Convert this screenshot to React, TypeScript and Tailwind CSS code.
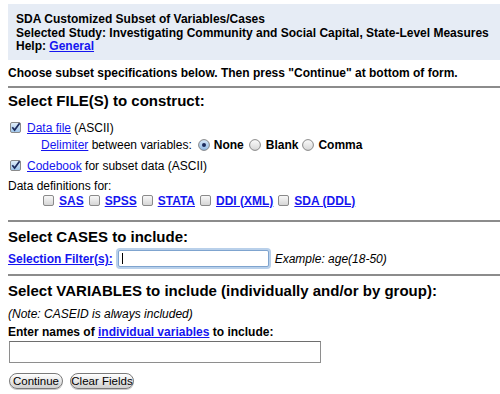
import React from "react";

function CheckBox({ checked }: { checked?: boolean }) {
  return (
    <svg width="11" height="11" viewBox="0 0 11 11" className="inline-block shrink-0">
      <defs>
        <linearGradient id={checked ? "cbOn" : "cbOff"} x1="0" y1="0" x2="0" y2="1">
          <stop offset="0" stopColor={checked ? "#e4f0fb" : "#fafafa"} />
          <stop offset="1" stopColor={checked ? "#9cc4ea" : "#d4d4d4"} />
        </linearGradient>
      </defs>
      <rect x="0.5" y="0.5" width="10" height="10" rx="1.5" fill={`url(#${checked ? "cbOn" : "cbOff"})`} stroke="#8a8a8a" />
      {checked && <path d="M2.3 5.2 L4.6 8 L9.6 1.2" fill="none" stroke="#1b2a5c" strokeWidth="1.7" />}
    </svg>
  );
}

function Radio({ checked }: { checked?: boolean }) {
  return (
    <svg width="12" height="12" viewBox="0 0 12 12" className="inline-block shrink-0">
      <defs>
        <linearGradient id={checked ? "rdOn" : "rdOff"} x1="0" y1="0" x2="0" y2="1">
          <stop offset="0" stopColor={checked ? "#d8e8f8" : "#fcfcfc"} />
          <stop offset="1" stopColor={checked ? "#8fb8e4" : "#d6d6d6"} />
        </linearGradient>
      </defs>
      <circle cx="6" cy="6" r="5.4" fill={`url(#${checked ? "rdOn" : "rdOff"})`} stroke="#7c7c7c" strokeWidth="0.9" />
      {checked && <circle cx="6" cy="6" r="2" fill="#1b2a5c" />}
    </svg>
  );
}

const link = "text-[#1515f0] underline";
const button =
  "h-[16px] rounded-full border border-[#7a7a7a] bg-gradient-to-b from-white to-[#d0d0d0] text-[11.5px] leading-[14px] shadow-[0_1px_0_#c8c8c8]";

export default function App() {
  return (
    <div className="w-[500px] h-[394px] overflow-hidden bg-white text-black text-[12px] font-['Liberation_Sans',Arial,sans-serif]">
      <div className="mt-[4px] ml-[8px] bg-[#e6ecf5] pt-[9px] pb-[6px] pl-[8px] font-bold leading-[13.5px]">
        <div>SDA Customized Subset of Variables/Cases</div>
        <div>Selected Study: Investigating Community and Social Capital, State-Level Measures</div>
        <div>
          Help: <a className={link}>General</a>
        </div>
      </div>

      <div className="mt-[6px] ml-[8px] font-bold leading-[14px]">
        Choose subset specifications below. Then press "Continue" at bottom of form.
      </div>
      <div className="mt-[6px] ml-[8px] border-t-2 border-[#8c8c8c]" />

      <div className="mt-[4px] ml-[8px] font-bold text-[15px] leading-[18px]">Select FILE(S) to construct:</div>

      <div className="mt-[10px] ml-[10px] flex items-center gap-[6px] leading-[16px]">
        <CheckBox checked />
        <span>
          <a className={link}>Data file</a> (ASCII)
        </span>
      </div>
      <div className="mt-[1px] ml-[41px] flex items-center leading-[16px]">
        <span>
          <a className={link}>Delimiter</a> between variables:
        </span>
        <span className="ml-[6px]"><Radio checked /></span>
        <span className="ml-[4px] font-bold">None</span>
        <span className="ml-[5px]"><Radio /></span>
        <span className="ml-[5px] font-bold">Blank</span>
        <span className="ml-[4px]"><Radio /></span>
        <span className="ml-[4px] font-bold">Comma</span>
      </div>
      <div className="mt-[5px] ml-[10px] flex items-center gap-[6px] leading-[16px]">
        <CheckBox checked />
        <span>
          <a className={link}>Codebook</a> for subset data (ASCII)
        </span>
      </div>
      <div className="mt-[5px] ml-[8px] leading-[14px]">Data definitions for:</div>
      <div className="ml-[43px] flex items-center gap-[5px] leading-[16px] font-bold">
        <CheckBox />
        <a className={link}>SAS</a>
        <CheckBox />
        <a className={link}>SPSS</a>
        <CheckBox />
        <a className={link}>STATA</a>
        <CheckBox />
        <a className={link}>DDI (XML)</a>
        <CheckBox />
        <a className={link}>SDA (DDL)</a>
      </div>
      <div className="mt-[11px] ml-[8px] border-t-2 border-[#8c8c8c]" />

      <div className="mt-[6px] ml-[8px] font-bold text-[15px] leading-[18px]">Select CASES to include:</div>
      <div className="mt-[4px] ml-[8px] flex items-center h-[18px]">
        <a className={`${link} font-bold`}>Selection Filter(s):</a>
        <div className="relative ml-[5px] w-[151px] h-[17px] border border-[#7fa4cf] rounded-[2px] shadow-[0_0_0_2px_#b9d0ea] bg-white">
          <span className="absolute left-[3px] top-[2px] w-[1px] h-[11px] bg-black" />
        </div>
        <span className="ml-[6px] italic">Example: age(18-50)</span>
      </div>
      <div className="mt-[6px] ml-[8px] border-t-2 border-[#8c8c8c]" />

      <div className="mt-[6px] ml-[8px] font-bold text-[15px] leading-[18px]">
        Select VARIABLES to include (individually and/or by group):
      </div>
      <div className="mt-[7px] ml-[8px] italic leading-[14px]">(Note: CASEID is always included)</div>
      <div className="mt-[4px] ml-[8px] font-bold leading-[14px]">
        Enter names of <a className={link}>individual variables</a> to include:
      </div>
      <input
        className="block mt-[2px] ml-[9px] w-[312px] h-[22px] border border-[#8e8e8e] border-t-[#6e6e6e] bg-white outline-none"
        readOnly
      />
      <div className="mt-[10px] ml-[9px] flex gap-[7px]">
        <button className={`${button} w-[54px]`}>Continue</button>
        <button className={`${button} w-[64px]`}>Clear Fields</button>
      </div>
    </div>
  );
}
